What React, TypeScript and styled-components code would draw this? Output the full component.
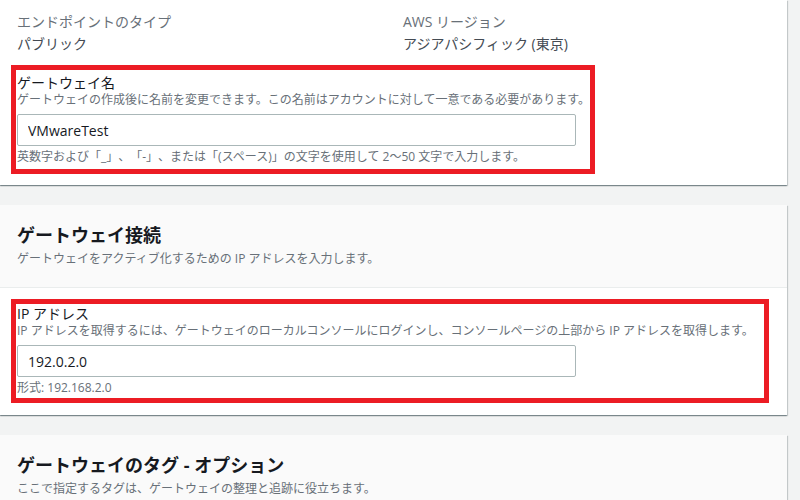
import React from 'react';
import styled, { createGlobalStyle } from 'styled-components';

const GlobalStyle = createGlobalStyle`
  html, body {
    margin: 0;
    padding: 0;
    background: #f2f3f3;
    font-family: "Open Sans", "Noto Sans CJK JP", sans-serif;
    color: #16191f;
    text-spacing-trim: space-all;
  }
`;

const Page = styled.div`
  width: 787px;
  display: flex;
  flex-direction: column;
  gap: 20px;
`;

const Card = styled.section`
  background: #ffffff;
  box-shadow:
    0 1px 1px 0 rgba(0, 28, 36, 0.3),
    1px 1px 1px 0 rgba(0, 28, 36, 0.15),
    -1px 1px 1px 0 rgba(0, 28, 36, 0.15);
`;

const CardHeader = styled.header`
  background: #fafafa;
  border-bottom: 1px solid #eaeded;
  padding: 18px 17px 20px;
`;

const CardTitle = styled.h2`
  margin: 0;
  font-size: 18px;
  line-height: 24px;
  font-weight: 700;
  color: #16191f;
`;

const CardDesc = styled.p`
  margin: 4px 0 0;
  font-size: 12px;
  line-height: 16px;
  color: #687078;
`;

const CardBody = styled.div<{ $top: number; $bottom: number }>`
  padding: ${(p) => p.$top}px 0 ${(p) => p.$bottom}px 11px;
`;

const Summary = styled.div`
  display: grid;
  grid-template-columns: 386px 1fr;
  padding-left: 6px;
  margin-bottom: 10px;
`;

const KeyLabel = styled.div`
  font-size: 14px;
  line-height: 22px;
  color: #687078;
`;

const KeyValue = styled.div`
  font-size: 14px;
  line-height: 22px;
  color: #444b53;
`;

const Highlight = styled.div<{ $width: number; $top: number; $bottom: number }>`
  width: ${(p) => p.$width}px;
  box-sizing: border-box;
  border: 5px solid #ec1c24;
  padding: ${(p) => p.$top}px 0 ${(p) => p.$bottom}px 1px;
`;

const FieldLabel = styled.label`
  display: block;
  font-size: 14px;
  line-height: 18px;
  color: #16191f;
`;

const FieldDesc = styled.div`
  font-size: 12px;
  line-height: 16px;
  color: #687078;
  white-space: nowrap;
`;

const TextInput = styled.input`
  display: block;
  box-sizing: border-box;
  width: 559px;
  height: 32px;
  margin-top: 6px;
  padding: 0 10px;
  border: 1px solid #aab7b8;
  border-radius: 2px;
  background: #fff;
  font-family: "Open Sans", "Noto Sans CJK JP", sans-serif;
  font-size: 14px;
  color: #16191f;
  outline: none;
`;

const FieldHint = styled.div`
  margin-top: 3px;
  font-size: 12px;
  line-height: 16px;
  color: #687078;
  white-space: nowrap;
`;

export default function App() {
  return (
    <>
      <GlobalStyle />
      <Page>
        <Card>
          <CardBody $top={11} $bottom={11}>
            <Summary>
              <div>
                <KeyLabel>エンドポイントのタイプ</KeyLabel>
                <KeyValue>パブリック</KeyValue>
              </div>
              <div>
                <KeyLabel>AWS リージョン</KeyLabel>
                <KeyValue>アジアパシフィック (東京)</KeyValue>
              </div>
            </Summary>
            <Highlight $width={584} $top={4} $bottom={4}>
              <FieldLabel>ゲートウェイ名</FieldLabel>
              <FieldDesc>
                ゲートウェイの作成後に名前を変更できます。この名前はアカウントに対して一意である必要があります。
              </FieldDesc>
              <TextInput defaultValue="VMwareTest" />
              <FieldHint>
                英数字および「_」、「-」、または「(スペース)」の文字を使用して 2～50 文字で入力します。
              </FieldHint>
            </Highlight>
          </CardBody>
        </Card>

        <Card>
          <CardHeader>
            <CardTitle>ゲートウェイ接続</CardTitle>
            <CardDesc>ゲートウェイをアクティブ化するための IP アドレスを入力します。</CardDesc>
          </CardHeader>
          <CardBody $top={11} $bottom={12}>
            <Highlight $width={758} $top={1} $bottom={2}>
              <FieldLabel>IP アドレス</FieldLabel>
              <FieldDesc>
                IP アドレスを取得するには、ゲートウェイのローカルコンソールにログインし、コンソールページの上部から IP アドレスを取得します。
              </FieldDesc>
              <TextInput defaultValue="192.0.2.0" />
              <FieldHint>形式: 192.168.2.0</FieldHint>
            </Highlight>
          </CardBody>
        </Card>

        <Card>
          <CardHeader>
            <CardTitle>ゲートウェイのタグ - オプション</CardTitle>
            <CardDesc>ここで指定するタグは、ゲートウェイの整理と追跡に役立ちます。</CardDesc>
          </CardHeader>
          <CardBody $top={20} $bottom={20} />
        </Card>
      </Page>
    </>
  );
}
